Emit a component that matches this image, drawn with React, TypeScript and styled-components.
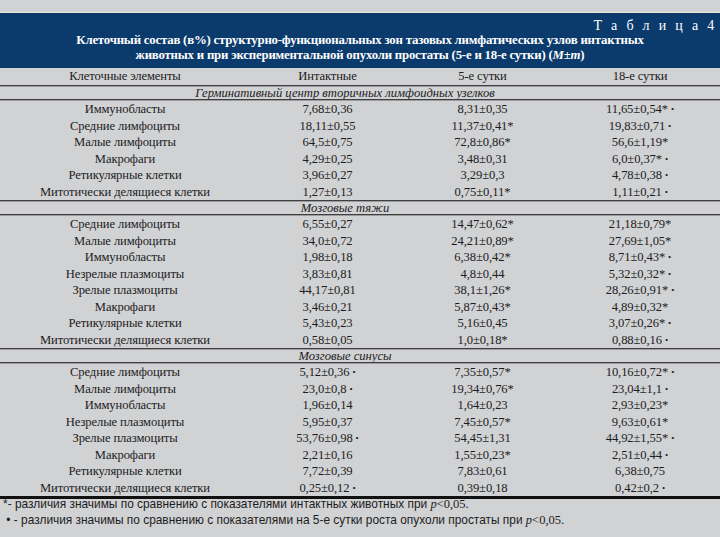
import styled, { createGlobalStyle } from 'styled-components';

const GlobalStyle = createGlobalStyle`
    html, body {
        margin: 0;
        padding: 0;
        background: #d1d2d4;
    }
`

const Page = styled.div`
    width: 720px;
    height: 537px;
    overflow: hidden;
    background: #d1d2d4;
    color: #1c1c1c;
    font-family: "Liberation Serif", "Times New Roman", serif;
`

const TopStrip = styled.div`
    height: 12px;
    border-bottom: 1px solid #efe7d8;
`

const Header = styled.header`
    background: #0b3a6c;
    color: #ffffff;
    padding: 6px 0 6px;
    height: 55px;
    box-sizing: border-box;
`

const Caption = styled.div`
    text-align: right;
    font-size: 14px;
    line-height: 14px;
    letter-spacing: 2.8px;
    padding-right: 3px;
`

const Title = styled.h1`
    margin: 0;
    text-align: center;
    font-size: 12.8px;
    line-height: 14.5px;
    letter-spacing: -0.2px;
    font-weight: bold;
`

const Grid = styled.div`
    display: grid;
    grid-template-columns: 250px 155px 155px 1fr;
`

const Cell = styled.div<{ $h: number }>`
    height: ${({ $h }) => $h}px;
    line-height: ${({ $h }) => $h}px;
    text-align: center;
    font-size: 12.6px;
    letter-spacing: -0.1px;
    white-space: nowrap;
`

const Rule = styled.div<{ $thick?: boolean }>`
    grid-column: 1 / -1;
    height: ${({ $thick }) => ($thick ? 3 : 1)}px;
    background: ${({ $thick }) => ($thick ? '#111111' : '#3f3f3f')};
    border-bottom: ${({ $thick }) => ($thick ? 'none' : '1px solid #9c9c9e')};
`

const Section = styled.div`
    grid-column: 1 / -1;
    height: 12px;
    line-height: 12px;
    text-align: center;
    padding-right: 30px;
    font-size: 12.6px;
    font-style: italic;
`

const Dot = styled.span`
    font-size: 9px;
    margin-left: 3px;
    vertical-align: 1px;
`

const Notes = styled.div`
    margin-top: -3px;
    padding-left: 3px;
    font-family: "Liberation Sans", Arial, sans-serif;
    font-size: 11.9px;
    line-height: 16px;
`

const Serif = styled.span`
    font-family: "Liberation Serif", "Times New Roman", serif;
    font-size: 12.5px;
`

type Row = [string, string, string, string];

const sections: { title: string; rows: Row[] }[] = [
    {
        title: 'Герминативный центр вторичных лимфоидных узелков',
        rows: [
            ['Иммунобласты', '7,68±0,36', '8,31±0,35', '11,65±0,54* •'],
            ['Средние лимфоциты', '18,11±0,55', '11,37±0,41*', '19,83±0,71 •'],
            ['Малые лимфоциты', '64,5±0,75', '72,8±0,86*', '56,6±1,19*'],
            ['Макрофаги', '4,29±0,25', '3,48±0,31', '6,0±0,37* •'],
            ['Ретикулярные клетки', '3,96±0,27', '3,29±0,3', '4,78±0,38 •'],
            ['Митотически делящиеся клетки', '1,27±0,13', '0,75±0,11*', '1,11±0,21 •'],
        ],
    },
    {
        title: 'Мозговые тяжи',
        rows: [
            ['Средние лимфоциты', '6,55±0,27', '14,47±0,62*', '21,18±0,79*'],
            ['Малые лимфоциты', '34,0±0,72', '24,21±0,89*', '27,69±1,05*'],
            ['Иммунобласты', '1,98±0,18', '6,38±0,42*', '8,71±0,43* •'],
            ['Незрелые плазмоциты', '3,83±0,81', '4,8±0,44', '5,32±0,32* •'],
            ['Зрелые плазмоциты', '44,17±0,81', '38,1±1,26*', '28,26±0,91* •'],
            ['Макрофаги', '3,46±0,21', '5,87±0,43*', '4,89±0,32*'],
            ['Ретикулярные клетки', '5,43±0,23', '5,16±0,45', '3,07±0,26* •'],
            ['Митотически делящиеся клетки', '0,58±0,05', '1,0±0,18*', '0,88±0,16 •'],
        ],
    },
    {
        title: 'Мозговые синусы',
        rows: [
            ['Средние лимфоциты', '5,12±0,36 •', '7,35±0,57*', '10,16±0,72* •'],
            ['Малые лимфоциты', '23,0±0,8 •', '19,34±0,76*', '23,04±1,1 •'],
            ['Иммунобласты', '1,96±0,14', '1,64±0,23', '2,93±0,23*'],
            ['Незрелые плазмоциты', '5,95±0,37', '7,45±0,57*', '9,63±0,61*'],
            ['Зрелые плазмоциты', '53,76±0,98 •', '54,45±1,31', '44,92±1,55* •'],
            ['Макрофаги', '2,21±0,16', '1,55±0,23*', '2,51±0,44 •'],
            ['Ретикулярные клетки', '7,72±0,39', '7,83±0,61', '6,38±0,75'],
            ['Митотически делящиеся клетки', '0,25±0,12 •', '0,39±0,18', '0,42±0,2 •'],
        ],
    },
];

const Value = ({ text }: { text: string }) => {
    const marked = text.endsWith(' •');
    const body = marked ? text.slice(0, -2) : text;
    return (
        <>
            {body}
            {marked && <Dot>•</Dot>}
        </>
    );
};

const App = () => {
    return (
        <Page>
            <GlobalStyle />
            <TopStrip />
            <Header>
                <Caption>Т а б л и ц а 4</Caption>
                <Title>
                    Клеточный состав (в%) структурно-функциональных зон тазовых лимфатических узлов интактных
                    <br />
                    животных и при экспериментальной опухоли простаты (5-е и 18-е сутки) (<i>M</i>±<i>m</i>)
                </Title>
            </Header>
            <Grid>
                <Cell $h={17}>Клеточные элементы</Cell>
                <Cell $h={17}>Интактные</Cell>
                <Cell $h={17}>5-е сутки</Cell>
                <Cell $h={17}>18-е сутки</Cell>
                {sections.map((section) => (
                    <>
                        <Rule key={section.title + '-top'} />
                        <Section key={section.title}>{section.title}</Section>
                        <Rule key={section.title + '-bottom'} />
                        {section.rows.map((row, i) =>
                            row.map((text, j) => (
                                <Cell key={section.title + i + '-' + j} $h={16.5}>
                                    <Value text={text} />
                                </Cell>
                            ))
                        )}
                    </>
                ))}
                <Rule $thick />
            </Grid>
            <Notes>
                <div>*- различия значимы по сравнению с показателями интактных животных при <Serif><i>p</i>&lt;0,05.</Serif></div>
                <div>&nbsp;• - различия значимы по сравнению с показателями на 5-е сутки роста опухоли простаты при <Serif><i>p</i>&lt;0,05.</Serif></div>
            </Notes>
        </Page>
    );
};

export default App;
